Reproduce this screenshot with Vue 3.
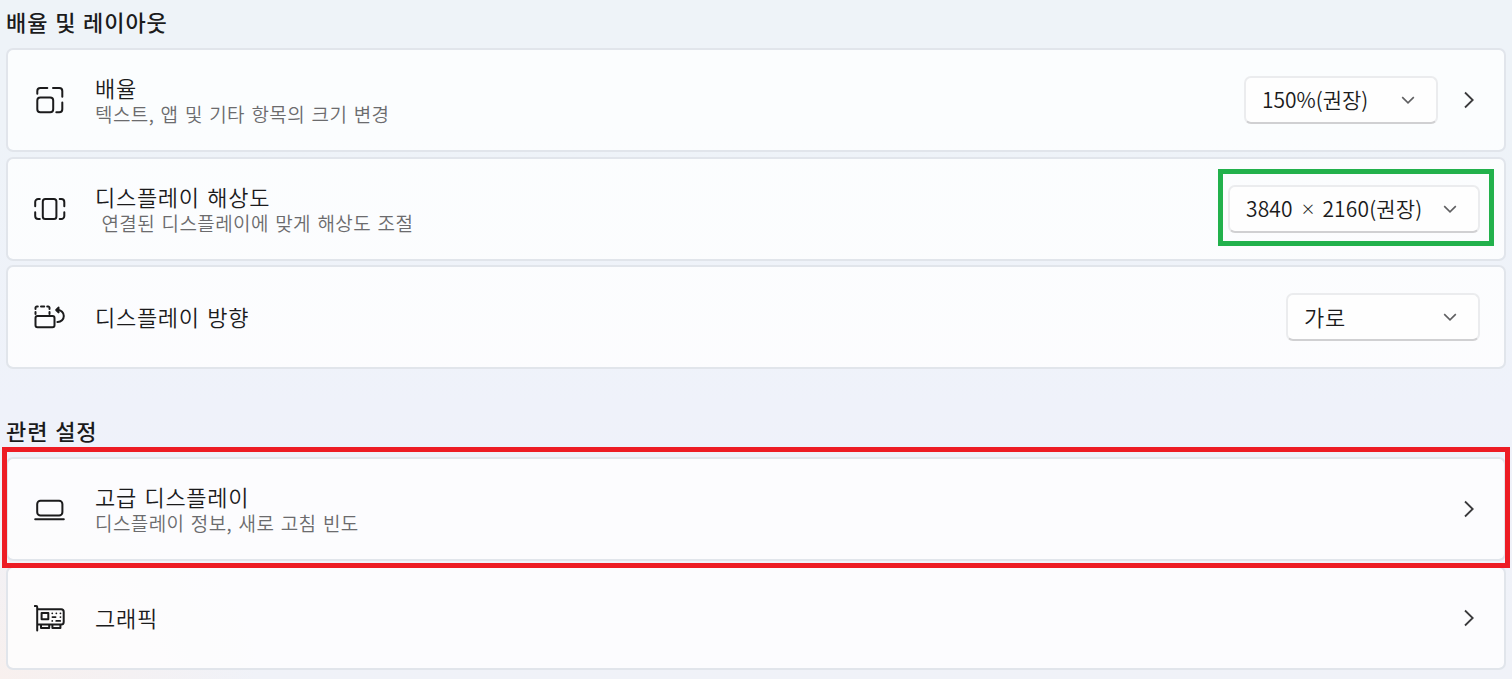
<script setup>

import { ref } from 'vue'

const secoes = ref([
  {
    titulo: '배율 및 레이아웃',
    itens: [
      { id: 'scale', nome: '배율', descricao: '텍스트, 앱 및 기타 항목의 크기 변경', valor: ['150%(권장)'], seta: true },
      { id: 'resolution', nome: '디스플레이 해상도', descricao: '\u00a0연결된 디스플레이에 맞게 해상도 조절', valor: ['3840', '2160(권장)'] },
      { id: 'orientation', nome: '디스플레이 방향', valor: ['가로'] }
    ]
  },
  {
    titulo: '관련 설정',
    itens: [
      { id: 'advanced', nome: '고급 디스플레이', descricao: '디스플레이 정보, 새로 고침 빈도', seta: true },
      { id: 'graphics', nome: '그래픽', seta: true }
    ]
  }
])
</script>

<template>
  <main class="pagina">
    <section v-for="secao in secoes" :key="secao.titulo" class="secao">
      <h2 class="titulo">{{ secao.titulo }}</h2>

      <div v-for="item in secao.itens" :key="item.id" class="cartao" :class="item.id">
        <svg class="icone" viewBox="0 0 32 32">
          <g v-if="item.id === 'scale'">
            <path d="M3.3 9.7V7a3 3 0 0 1 3-3h7M19 4h6.3a3 3 0 0 1 3 3v5.7M28.3 18.6v6.7a3 3 0 0 1-3 3H22.3" />
            <rect x="3.3" y="13.6" width="15.9" height="14.7" rx="3" />
          </g>
          <g v-else-if="item.id === 'resolution'">
            <rect x="8.8" y="6" width="13.6" height="20" rx="2.5" />
            <path d="M5.8 6H4.2a3 3 0 0 0-3 3v4.3M1.2 19.3V23a3 3 0 0 0 3 3h1.6M25.7 6h1.6a3 3 0 0 1 3 3v4.3M30.3 19.3V23a3 3 0 0 1-3 3h-1.6" />
          </g>
          <g v-else-if="item.id === 'orientation'">
            <rect x="1.5" y="15" width="19" height="11.2" rx="2" />
            <path d="M1.5 8V6.8a1.3 1.3 0 0 1 1.3-1.3h1M7 5.5h3.2M13.2 5.5h1a1.3 1.3 0 0 1 1.3 1.3V8M1.5 11v2M15.5 11v2M23 9h.8a6 6 0 0 1 0 12h-.4" />
            <path class="ponta" d="M24.5 6.6 22.2 9l2.3 2.4z" />
          </g>
          <g v-else-if="item.id === 'advanced'">
            <rect x="3.2" y="7.8" width="25.2" height="14.8" rx="3.3" />
            <path d="M1.2 26.2h28.6" />
          </g>
          <g v-else>
            <path d="M.8 4h1.4a1 1 0 0 1 1 1v23.5M3.2 7.2h24a2.5 2.5 0 0 1 2.5 2.5v10.2a2.5 2.5 0 0 1-2.5 2.5h-24M7 22.4v3.7h8.2v-3.7M18.4 22.4v3.7h8v-3.7" />
            <rect x="7.6" y="11" width="6.7" height="6.2" />
            <path class="pontos" d="M18.2 11.3h.1M22.3 11.3h.1M26.4 11.3h.1M18.4 15.1h3.2M26.4 15.1h.1M18.2 18.9h.1M22.2 18.9h4" />
          </g>
        </svg>

        <div class="textos">
          <p class="nome">{{ item.nome }}</p>
          <p v-if="item.descricao" class="descricao">{{ item.descricao }}</p>
        </div>

        <button v-if="item.valor" class="selecao">
          <span class="valor">{{ item.valor[0] }}<template v-if="item.valor[1]"><span class="vezes">×</span>{{ item.valor[1] }}</template></span>
          <svg class="abrir" viewBox="0 0 14 8"><path d="M1.2 1.2 7 6.8l5.8-5.6" /></svg>
        </button>
        <svg v-if="item.seta" class="seta" viewBox="0 0 12 18"><path d="M2 1.5 9.7 9 2 16.5" /></svg>
      </div>
    </section>
  </main>
</template>

<style>
body {
  margin: 0;
  overflow: hidden;
}
</style>

<style scoped>
.pagina {
  box-sizing: border-box;
  height: 679px;
  padding: 0 6px;
  color: #1b1b1c;
  font-family: "Noto Sans CJK KR", sans-serif;
  background:
    radial-gradient(ellipse 260px 190px at 0 100%, #f8f0ee 0, rgba(248, 240, 238, 0) 100%),
    linear-gradient(#eef3f8 0, #eef3f8 18%, #eff2fa 60%, #f0f2f8 100%);
}

.secao {
  display: flex;
  flex-direction: column;
}

.secao + .secao {
  margin-top: 40px;
}

.titulo {
  height: 48px;
  margin: 0;
  font-size: 22px;
  font-weight: 500;
  line-height: 42px;
  letter-spacing: 0.9px;
  word-spacing: 1px;
}

.cartao {
  position: relative;
  display: flex;
  align-items: center;
  box-sizing: border-box;
  height: 104px;
  padding: 0 24px 0 26px;
  border: 2px solid #e1e5eb;
  border-radius: 7px;
  background: rgba(255, 255, 255, 0.78);
  background-clip: padding-box;
}

.resolution,
.graphics {
  margin-top: 5px;
}

.orientation {
  margin-top: 4px;
}

.icone {
  width: 32px;
  height: 32px;
  fill: none;
  stroke: #1b1b1c;
  stroke-width: 2;
  stroke-linecap: round;
  stroke-linejoin: round;
}

.pontos {
  stroke-width: 1.7;
}

.ponta {
  fill: #1b1b1c;
}

.textos {
  flex: 1;
  margin-left: 29px;
}

p {
  margin: 0;
}

.nome {
  font-size: 22px;
  font-weight: 350;
  line-height: 27px;
  letter-spacing: 0.7px;
  word-spacing: 2px;
}

.orientation .nome,
.graphics .nome {
  margin-top: -2px;
}

.descricao {
  color: #6b6b6d;
  font-size: 19px;
  font-weight: 350;
  line-height: 25px;
  letter-spacing: 0.4px;
  word-spacing: 1.8px;
}

.selecao {
  position: relative;
  display: flex;
  align-items: center;
  justify-content: space-between;
  box-sizing: border-box;
  width: 194px;
  height: 48px;
  padding: 0 21px 0 16px;
  border: 2px solid #ebecee;
  border-bottom-color: #d0d0d2;
  border-radius: 7px;
  color: #1b1b1c;
  background: #fefefe;
  font-family: inherit;
  font-size: 21px;
}

.valor {
  margin-top: -2px;
  font-weight: 350;
}

.orientation .valor {
  font-size: 22px;
  letter-spacing: 0.7px;
}

.vezes {
  margin: 0 8px 0 9px;
  font-family: "Open Sans", sans-serif;
  font-size: 22px;
}

.resolution .selecao {
  width: 252px;
}

.resolution .valor {
  letter-spacing: 0.15px;
}

.scale .selecao {
  margin-right: 25px;
}

.abrir {
  width: 14px;
  height: 8px;
  fill: none;
  stroke: #5f5f61;
  stroke-width: 1.6;
}

.seta {
  width: 12px;
  height: 18px;
  margin-right: 5px;
  fill: none;
  stroke: #3a3a3c;
  stroke-width: 1.8;
}

/* destaques desenhados por cima dos cartoes */
.resolution .selecao::after {
  content: "";
  position: absolute;
  top: -18px;
  left: -12px;
  width: 266px;
  height: 67px;
  border: 5px solid #22b14c;
}

.advanced::after {
  content: "";
  position: absolute;
  z-index: 1;
  top: -12px;
  left: -6px;
  width: 1498px;
  height: 111px;
  border: 5px solid #ed1c24;
}
</style>
